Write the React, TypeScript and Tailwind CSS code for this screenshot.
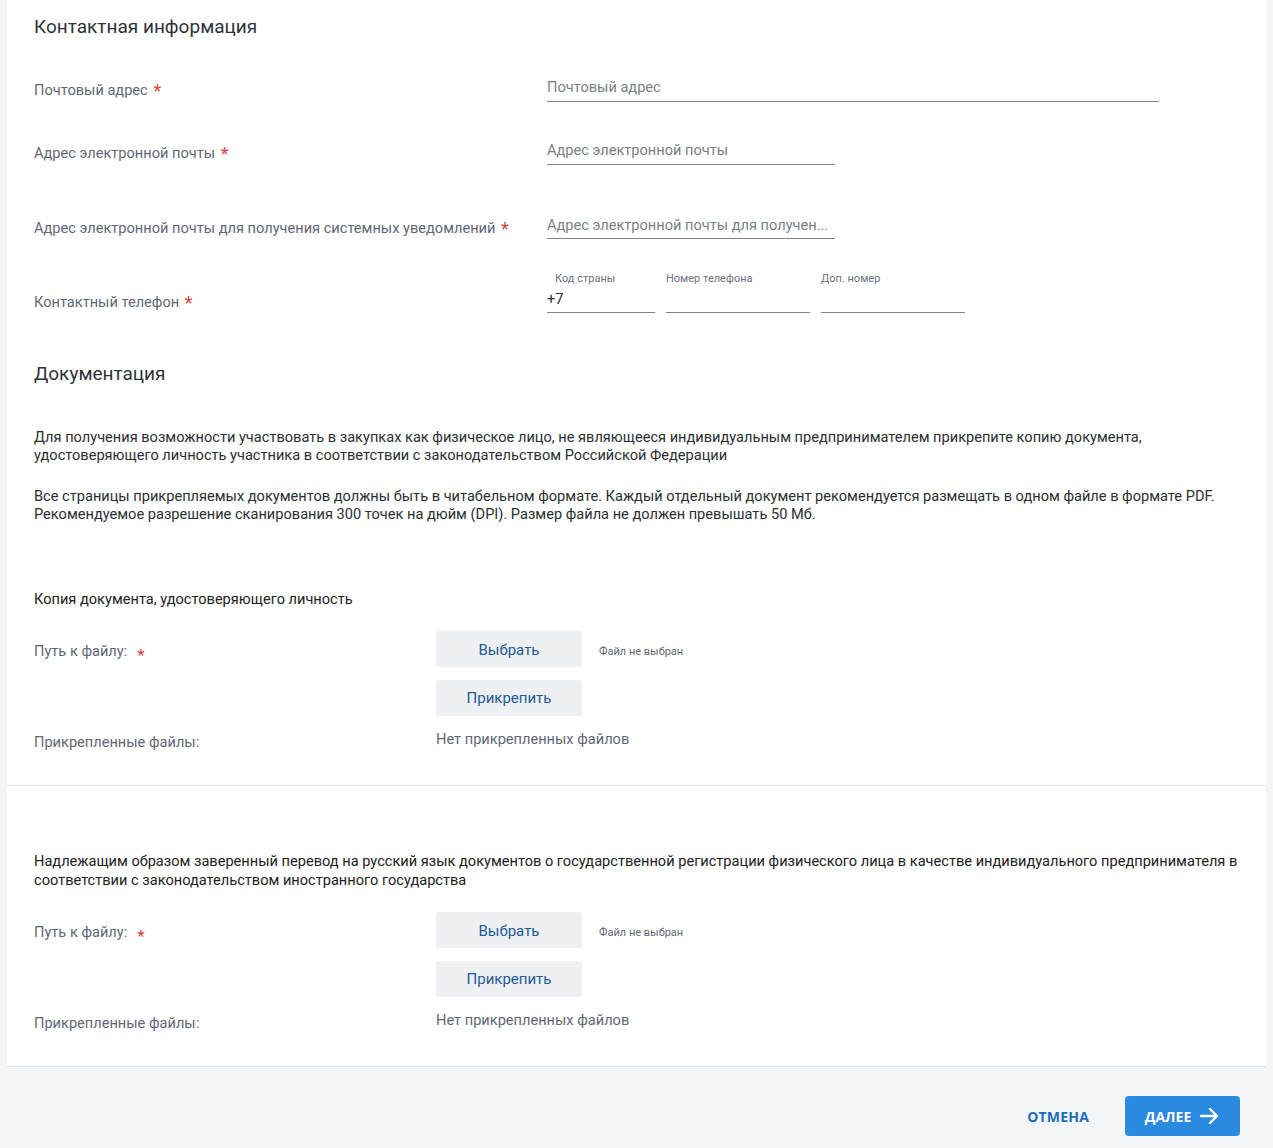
import React from "react";

const Star = () => (
  <span className="inline-block ml-[2px] align-top mt-[1px] text-[#d64541] text-[18px] leading-[20px]">*</span>
);

const T = "text-[14.6px] leading-[20px]";

function FileBlock() {
  return (
    <div>
      <div className="mt-[22px] flex">
        <div className="w-[402px] pt-[10px] flex items-start">
          <span className={T + " text-[#5f6875]"}>Путь к файлу:</span>
          <span className="ml-[10px] mt-[4px] text-[#d64541] text-[17px] leading-[20px]">*</span>
        </div>
        <div className="flex flex-col">
          <div className="flex items-center">
            <button className="w-[146px] h-[36px] rounded-[3px] bg-[#eef0f3] pt-[2px] text-[15px] text-[#235b95]">Выбрать</button>
            <span className="ml-[17px] mt-[6px] text-[11px] text-[#5f6875]">Файл не выбран</span>
          </div>
          <button className="mt-[13px] w-[146px] h-[36px] rounded-[3px] bg-[#eef0f3] text-[15px] text-[#235b95]">Прикрепить</button>
        </div>
      </div>
      <div className="mt-[13px] flex">
        <div className={"w-[402px] pt-[3px] text-[#5f6875] " + T}>Прикрепленные файлы:</div>
        <div className={"text-[#5f6875] " + T}>Нет прикрепленных файлов</div>
      </div>
    </div>
  );
}

export default function App() {
  return (
    <div className="min-h-[1148px] bg-[#f4f5f8]" style={{ fontFamily: "Roboto, 'Noto Sans', sans-serif" }}>
      <div className="mx-[7px] bg-white border-b border-[#e2e4e8]">
        <div className="px-[27px] pb-[33px]">
          <h2 className="pt-[15px] text-[19px] leading-[24px] text-[#2e3338]">Контактная информация</h2>

          {/* Row 1 */}
          <div className="mt-[19px] h-[63px] flex items-start">
            <div className={"w-[513px] mt-[22px] text-[#5f6875] " + T}>
              Почтовый адрес <Star />
            </div>
            <div className={"mt-[18px] w-[612px] h-[26px] border-b border-[#7c848e] pt-[1px] text-[#7a8088] " + T}>
              Почтовый адрес
            </div>
          </div>

          {/* Row 2 */}
          <div className="h-[75px] flex items-start">
            <div className={"w-[513px] mt-[22px] text-[#5f6875] " + T}>
              Адрес электронной почты <Star />
            </div>
            <div className={"mt-[18px] w-[288px] h-[26px] border-b border-[#7c848e] pt-[1px] text-[#7a8088] " + T}>
              Адрес электронной почты
            </div>
          </div>

          {/* Row 3 */}
          <div className="h-[50px] flex items-start">
            <div className={"w-[513px] mt-[22px] text-[#5f6875] " + T}>
              Адрес электронной почты для получения системных уведомлений <Star />
            </div>
            <div className={"mt-[18px] w-[288px] h-[25px] border-b border-[#7c848e] pt-[1px] text-[#7a8088] whitespace-nowrap " + T}>
              Адрес электронной почты для получен...
            </div>
          </div>

          {/* Row 4 */}
          <div className="h-[70px] flex items-start">
            <div className={"w-[513px] mt-[46px] text-[#5f6875] " + T}>
              Контактный телефон <Star />
            </div>
            <div className="mt-[26px] flex gap-[11px]">
              <div className="w-[108px]">
                <div className="pl-[8px] text-[11px] leading-[14px] text-[#6b7380]">Код страны</div>
                <div className={"mt-[3px] h-[24px] border-b border-[#7c848e] text-[#2b2f33] " + T}>+7</div>
              </div>
              <div className="w-[144px]">
                <div className="text-[11px] leading-[14px] text-[#6b7380]">Номер телефона</div>
                <div className="mt-[3px] h-[24px] border-b border-[#7c848e]"></div>
              </div>
              <div className="w-[144px]">
                <div className="text-[11px] leading-[14px] text-[#6b7380]">Доп. номер</div>
                <div className="mt-[3px] h-[24px] border-b border-[#7c848e]"></div>
              </div>
            </div>
          </div>

          <h2 className="mt-[46px] text-[19px] leading-[24px] text-[#2e3338]">Документация</h2>

          <p className="mt-[42px] text-[14.6px] leading-[18px] text-[#2b2f33]">
            Для получения возможности участвовать в закупках как физическое лицо, не являющееся индивидуальным предпринимателем прикрепите копию документа,
            <br />
            удостоверяющего личность участника в соответствии с законодательством Российской Федерации
          </p>
          <p className="mt-[23px] text-[14.6px] leading-[18px] text-[#2b2f33]">
            Все страницы прикрепляемых документов должны быть в читабельном формате. Каждый отдельный документ рекомендуется размещать в одном файле в формате PDF.
            <br />
            Рекомендуемое разрешение сканирования 300 точек на дюйм (DPI). Размер файла не должен превышать 50 Мб.
          </p>

          <div className={"mt-[66px] text-[#222] " + T}>Копия документа, удостоверяющего личность</div>
          <FileBlock />
        </div>

        <div className="h-px bg-[#e3e5e8]"></div>

        <div className="px-[27px] pb-[33px]">
          <p className="pt-[66px] text-[14.6px] leading-[19px] text-[#222]">
            Надлежащим образом заверенный перевод на русский язык документов о государственной регистрации физического лица в качестве индивидуального предпринимателя в
            <br />
            соответствии с законодательством иностранного государства
          </p>
          <FileBlock />
        </div>
      </div>

      <div className="flex justify-end items-center pr-[33px] pt-[29px]">
        <button className="mr-[36px] text-[14px] font-bold text-[#1c6fb5] tracking-[0.2px]" style={{ fontFamily: "'Open Sans', sans-serif" }}>
          ОТМЕНА
        </button>
        <button
          className="w-[115px] h-[40px] rounded-[4px] bg-[#2a8ae0] text-white text-[14px] font-bold flex items-center justify-center gap-[8px]"
          style={{ fontFamily: "'Open Sans', sans-serif" }}
        >
          ДАЛЕЕ
          <svg width="21" height="18" viewBox="0 0 21 18" fill="none" stroke="white" strokeWidth="2.4" strokeLinecap="round" strokeLinejoin="round">
            <path d="M2 9h16M11 2l7 7-7 7" />
          </svg>
        </button>
      </div>
    </div>
  );
}
